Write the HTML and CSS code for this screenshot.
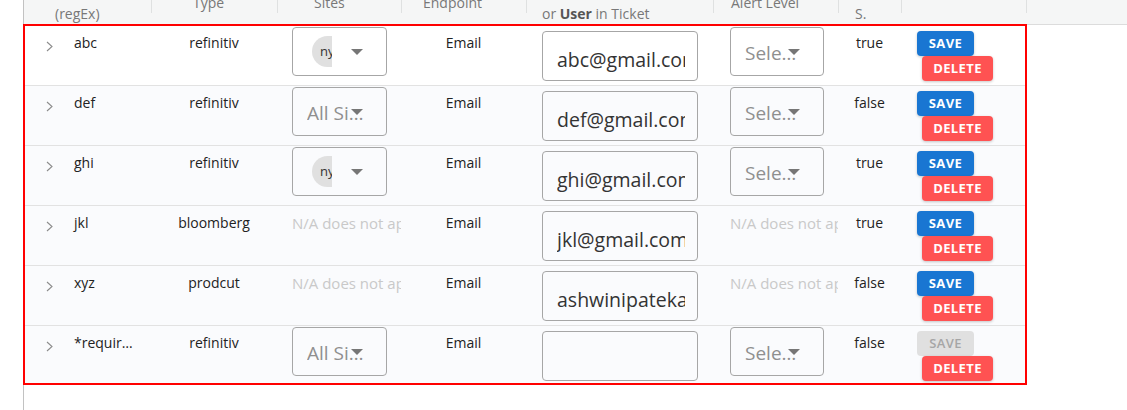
FILE: index.html
```html
<!DOCTYPE html>
<html lang="en">
<head>
<meta charset="utf-8">
<title>Rules</title>
<link rel="stylesheet" href="styles.css">
</head>
<body>
<div class="page">
  <div class="thead">
    <div class="hc h-name l2">(regEx)</div><i class="sep"></i>
    <div class="hc h-type l1">Type</div><i class="sep"></i>
    <div class="hc h-sites l1">Sites</div><i class="sep"></i>
    <div class="hc h-end l1">Endpoint</div><i class="sep"></i>
    <div class="hc h-email l2">or <b>User</b> in Ticket</div><i class="sep"></i>
    <div class="hc h-alert l1">Alert Level</div><i class="sep"></i>
    <div class="hc h-stat l2">S.</div><i class="sep"></i>
    <div class="hc h-act"></div><i class="sep"></i>
    <div class="hc h-rest"></div>
  </div>

  <div class="tbody">
    <div class="row first">
      <div class="c c-exp"><svg class="chev" viewBox="0 0 7 11" width="7" height="11"><polyline points="1,1 6,5.5 1,10"/></svg></div>
      <div class="c c-name">abc</div>
      <div class="c c-type">refinitiv</div>
      <div class="c c-sites"><div class="sel"><span class="chipwrap"><span class="chip">ny</span></span><i class="arrow"></i></div></div>
      <div class="c c-end">Email</div>
      <div class="c c-email"><input class="inp" type="text" value="abc@gmail.com"></div>
      <div class="c c-alert"><div class="sel sel-alert"><span class="ph">Select Level</span><i class="arrow"></i></div></div>
      <div class="c c-stat">true</div>
      <div class="c c-act"><button class="btn save">Save</button><button class="btn del">Delete</button></div>
    </div>

    <div class="row">
      <div class="c c-exp"><svg class="chev" viewBox="0 0 7 11" width="7" height="11"><polyline points="1,1 6,5.5 1,10"/></svg></div>
      <div class="c c-name">def</div>
      <div class="c c-type">refinitiv</div>
      <div class="c c-sites"><div class="sel"><span class="ph">All Sites</span><i class="arrow"></i></div></div>
      <div class="c c-end">Email</div>
      <div class="c c-email"><input class="inp" type="text" value="def@gmail.com"></div>
      <div class="c c-alert"><div class="sel sel-alert"><span class="ph">Select Level</span><i class="arrow"></i></div></div>
      <div class="c c-stat">false</div>
      <div class="c c-act"><button class="btn save">Save</button><button class="btn del">Delete</button></div>
    </div>

    <div class="row">
      <div class="c c-exp"><svg class="chev" viewBox="0 0 7 11" width="7" height="11"><polyline points="1,1 6,5.5 1,10"/></svg></div>
      <div class="c c-name">ghi</div>
      <div class="c c-type">refinitiv</div>
      <div class="c c-sites"><div class="sel"><span class="chipwrap"><span class="chip">ny</span></span><i class="arrow"></i></div></div>
      <div class="c c-end">Email</div>
      <div class="c c-email"><input class="inp" type="text" value="ghi@gmail.com"></div>
      <div class="c c-alert"><div class="sel sel-alert"><span class="ph">Select Level</span><i class="arrow"></i></div></div>
      <div class="c c-stat">true</div>
      <div class="c c-act"><button class="btn save">Save</button><button class="btn del">Delete</button></div>
    </div>

    <div class="row">
      <div class="c c-exp"><svg class="chev" viewBox="0 0 7 11" width="7" height="11"><polyline points="1,1 6,5.5 1,10"/></svg></div>
      <div class="c c-name">jkl</div>
      <div class="c c-type">bloomberg</div>
      <div class="c c-sites na"><span class="na-text">N/A does not apply</span></div>
      <div class="c c-end">Email</div>
      <div class="c c-email"><input class="inp" type="text" value="jkl@gmail.com"></div>
      <div class="c c-alert na"><span class="na-text">N/A does not apply</span></div>
      <div class="c c-stat">true</div>
      <div class="c c-act"><button class="btn save">Save</button><button class="btn del">Delete</button></div>
    </div>

    <div class="row">
      <div class="c c-exp"><svg class="chev" viewBox="0 0 7 11" width="7" height="11"><polyline points="1,1 6,5.5 1,10"/></svg></div>
      <div class="c c-name">xyz</div>
      <div class="c c-type">prodcut</div>
      <div class="c c-sites na"><span class="na-text">N/A does not apply</span></div>
      <div class="c c-end">Email</div>
      <div class="c c-email"><input class="inp" type="text" value="ashwinipatekar@gmail.com"></div>
      <div class="c c-alert na"><span class="na-text">N/A does not apply</span></div>
      <div class="c c-stat">false</div>
      <div class="c c-act"><button class="btn save">Save</button><button class="btn del">Delete</button></div>
    </div>

    <div class="row last">
      <div class="c c-exp"><svg class="chev" viewBox="0 0 7 11" width="7" height="11"><polyline points="1,1 6,5.5 1,10"/></svg></div>
      <div class="c c-name">*required</div>
      <div class="c c-type">refinitiv</div>
      <div class="c c-sites"><div class="sel"><span class="ph">All Sites</span><i class="arrow"></i></div></div>
      <div class="c c-end">Email</div>
      <div class="c c-email"><input class="inp" type="text" value=""></div>
      <div class="c c-alert"><div class="sel sel-alert"><span class="ph">Select Level</span><i class="arrow"></i></div></div>
      <div class="c c-stat">false</div>
      <div class="c c-act"><button class="btn save" disabled>Save</button><button class="btn del">Delete</button></div>
    </div>
  </div>
</div>
</body>
</html>
```

FILE: styles.css
```css
* { box-sizing: border-box; }

html, body {
  margin: 0;
  padding: 0;
  background: #ffffff;
}

body {
  font-family: "Open Sans", "Noto Sans", "Liberation Sans", sans-serif;
  font-size: 14px;
  color: #222;
  width: 1127px;
  height: 410px;
  overflow: hidden;
}

.page {
  margin-left: 23px;
  border-left: 1px solid #c2c2c2;
  height: 410px;
}

/* ---------- header ---------- */
.thead {
  display: flex;
  align-items: flex-start;
  height: 25px;
  background: #f5f6f6;
  border-bottom: 1px solid #dcdcdc;
  overflow: hidden;
}

.hc {
  flex: none;
  font-size: 14px;
  line-height: 22px;
  color: #787878;
  white-space: nowrap;
  overflow: hidden;
}
.hc b { color: #555; font-weight: 700; }
.l1 { margin-top: -8px; }
.l2 { margin-top: 3px; }

.sep {
  flex: none;
  width: 1px;
  height: 20px;
  margin-top: -7px;
  background: #dfe1e1;
}

.h-name  { width: 127px; padding-left: 31px; }
.h-type  { width: 125px; padding-left: 41px; }
.h-sites { width: 123px; padding-left: 36px; }
.h-end   { width: 124px; padding-left: 21px; }
.h-email { width: 186px; padding-left: 15px; }
.h-alert { width: 124px; padding-left: 17px; }
.h-stat  { width: 62px;  padding-left: 16px; }
.h-act   { width: 124px; }
.h-rest  { flex: 1; }

/* ---------- body ---------- */
.tbody {
  width: 1004px;
  margin-left: -1px;
  margin-top: -1px;
  border: 2px solid #ff0000;
}

.row {
  display: flex;
  align-items: flex-start;
  height: 60px;
  border-bottom: 1px solid #e2e2e2;
  background: #fafbfd;
}
.row.first { background: #ffffff; }
.row.last { height: 57px; border-bottom: none; }

.c {
  flex: none;
  line-height: 22px;
  padding-top: 6px;
  white-space: nowrap;
  overflow: hidden;
}

.c-exp   { width: 41px; padding-left: 21px; padding-top: 15px; line-height: 0; }
.c-name  { width: 85px; padding-left: 8px; padding-right: 16px; text-overflow: ellipsis; }
.c-type  { width: 126px; text-align: center; }
.c-sites { width: 124px; padding-left: 15px; padding-top: 1px; }
.c-end   { width: 125px; text-align: center; }
.c-email { width: 187px; padding-left: 16px; padding-top: 5px; }
.c-alert { width: 125px; padding-left: 17px; padding-top: 1px; }
.c-stat  { width: 63px; text-align: center; }
.c-act   { width: 124px; padding-left: 16px; padding-top: 5px; display: flex; flex-direction: column; align-items: flex-start; overflow: visible; }

.c.na { color: #c9c9c9; padding-top: 6px; font-size: 15px; }
.na-text {
  display: block;
  overflow: hidden;
  white-space: nowrap;
}

.chev {
  display: block;
  fill: none;
  stroke: #8c8c8c;
  stroke-width: 1.1;
}

/* select */
.sel {
  position: relative;
  display: flex;
  align-items: center;
  width: 95px;
  height: 49px;
  border: 1px solid #a6a6a6;
  border-radius: 4px;
  padding-left: 14px;
}
.sel-alert { width: 94px; }

.ph {
  display: block;
  max-width: 60px;
  font-size: 19px;
  line-height: 26px;
  color: #8f8f8f;
  overflow: hidden;
  text-overflow: ellipsis;
  white-space: nowrap;
  padding-top: 2px;
}

.chipwrap {
  display: block;
  width: 20px;
  margin-left: 5px;
  overflow: hidden;
}
.chip {
  display: block;
  width: 36px;
  height: 31px;
  line-height: 31px;
  border-radius: 16px;
  background: #e0e0e0;
  color: #333;
  font-size: 13px;
  padding-left: 8px;
}

.arrow {
  position: absolute;
  right: 23px;
  top: 50%;
  margin-top: -3px;
  width: 0;
  height: 0;
  border-left: 6px solid transparent;
  border-right: 6px solid transparent;
  border-top: 6px solid #767676;
}

/* input */
.inp {
  display: block;
  width: 156px;
  height: 50px;
  margin: 0;
  border: 1px solid #a6a6a6;
  border-radius: 4px;
  background: transparent;
  padding: 11px 12px 4px 14px;
  font-family: "Open Sans", "Noto Sans", "Liberation Sans", sans-serif;
  font-size: 19.5px;
  color: #333;
  outline: none;
}

/* buttons */
.btn {
  display: block;
  height: 25px;
  margin: 0;
  padding: 0;
  border: none;
  border-radius: 4px;
  font-family: "Open Sans", "Noto Sans", "Liberation Sans", sans-serif;
  font-size: 13px;
  font-weight: 700;
  letter-spacing: 0.4px;
  text-transform: uppercase;
  color: #ffffff;
  line-height: 25px;
  text-align: center;
  box-shadow: 0 1px 3px rgba(0, 0, 0, 0.22);
}
.save { width: 57px; background: #1976d2; }
.del  { width: 71px; margin-left: 5px; background: #ff5252; }
.save:disabled {
  background: #e0e0e0;
  color: #a6a6a6;
  box-shadow: none;
  font-weight: 600;
}
```
